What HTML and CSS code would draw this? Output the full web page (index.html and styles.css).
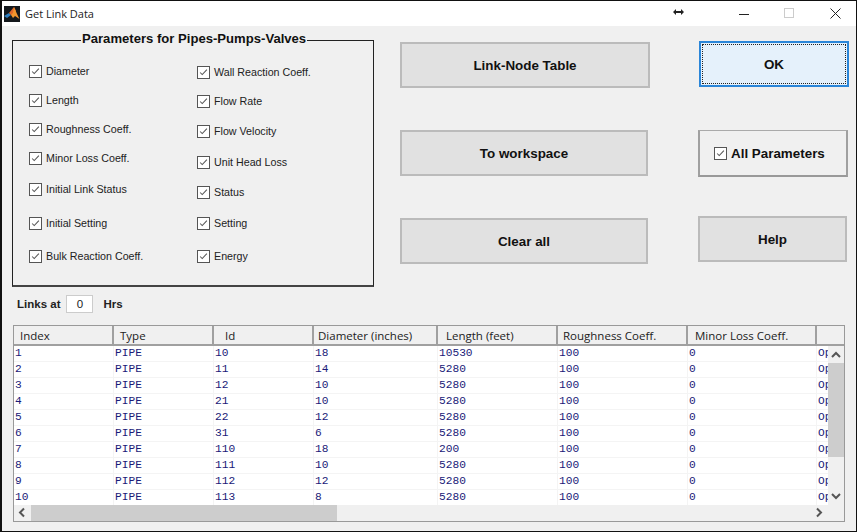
FILE: index.html
```html
<!DOCTYPE html>
<html lang="en">
<head>
  <meta charset="UTF-8" />
  <title>Get Link Data</title>
  <link rel="stylesheet" href="styles.css">
</head>
<body>
  <div class="window">
    <div class="titlebar">
      <svg class="app-icon" width="16" height="16" viewBox="0 0 16 16">
        <rect width="16" height="16" fill="#14181c" />
        <path d="M0 10 L5 7 L7 9 L3 12 Z" fill="#2f7fc0" />
        <path d="M5 7 L10 1 L12 5 L9 9 L7 9 Z" fill="#e2682a" />
        <path d="M10 1 L13 8 L15.5 13 L11 10 L9 12 L7 9 L9 7 Z" fill="#f2952e" />
      </svg>
      <span class="title">Get Link Data</span>
      <svg class="resize-icon" width="12" height="6" viewBox="0 0 12 6">
        <path d="M0 3 L3 0 V2 H8 V0 L11 3 L8 6 V4 H3 V6 Z" fill="#222" />
      </svg>
      <svg class="win-btn min" width="11" height="11" viewBox="0 0 11 11">
        <path d="M0 6.5 H10" stroke="#222" stroke-width="1" />
      </svg>
      <svg class="win-btn max" width="11" height="11" viewBox="0 0 11 11">
        <rect x="0.5" y="0.5" width="9" height="9" fill="none" stroke="#ccc" />
      </svg>
      <svg class="win-btn close" width="11" height="11" viewBox="0 0 11 11">
        <path d="M0.5 0.5 L10.5 10.5 M10.5 0.5 L0.5 10.5" stroke="#222" stroke-width="1" />
      </svg>
    </div>

    <div class="content">
      <div class="top-row">
        <fieldset class="params">
          <legend>Parameters for Pipes-Pumps-Valves</legend>
          <div class="param-col left">
            <label class="check"><input type="checkbox" checked /><span>Diameter</span></label>
            <label class="check"><input type="checkbox" checked /><span>Length</span></label>
            <label class="check"><input type="checkbox" checked /><span>Roughness Coeff.</span></label>
            <label class="check"><input type="checkbox" checked /><span>Minor Loss Coeff.</span></label>
            <label class="check"><input type="checkbox" checked /><span>Initial Link Status</span></label>
            <label class="check"><input type="checkbox" checked /><span>Initial Setting</span></label>
            <label class="check"><input type="checkbox" checked /><span>Bulk Reaction Coeff.</span></label>
          </div>
          <div class="param-col right">
            <label class="check"><input type="checkbox" checked /><span>Wall Reaction Coeff.</span></label>
            <label class="check"><input type="checkbox" checked /><span>Flow Rate</span></label>
            <label class="check"><input type="checkbox" checked /><span>Flow Velocity</span></label>
            <label class="check"><input type="checkbox" checked /><span>Unit Head Loss</span></label>
            <label class="check"><input type="checkbox" checked /><span>Status</span></label>
            <label class="check"><input type="checkbox" checked /><span>Setting</span></label>
            <label class="check"><input type="checkbox" checked /><span>Energy</span></label>
          </div>
        </fieldset>

        <div class="actions middle">
          <button class="btn wide">Link-Node Table</button>
          <button class="btn">To workspace</button>
          <button class="btn">Clear all</button>
        </div>

        <div class="actions side">
          <button class="btn ok"><span class="focus">OK</span></button>
          <label class="all-params"><input type="checkbox" checked /><span>All Parameters</span></label>
          <button class="btn help">Help</button>
        </div>
      </div>

      <div class="links-row">
        <span>Links at</span>
        <span class="hours">0</span>
        <span>Hrs</span>
      </div>

      <div class="grid-box">
        <div class="grid-head">
          <div class="c1">Index</div>
          <div class="c2">Type</div>
          <div class="c3">Id</div>
          <div class="c4">Diameter (inches)</div>
          <div class="c5">Length (feet)</div>
          <div class="c6">Roughness Coeff.</div>
          <div class="c7">Minor Loss Coeff.</div>
          <div class="c8"></div>
        </div>
        <div class="grid-body" id="gridBody"></div>
        <div class="vscroll">
          <svg class="arrow" width="16" height="17" viewBox="0 0 16 17"><path d="M4 11 L8 7 L12 11" fill="none" stroke="#555" stroke-width="2" /></svg>
          <div class="vthumb"></div>
          <div class="track"></div>
          <svg class="arrow" width="16" height="15" viewBox="0 0 16 15"><path d="M4 4 L8 8 L12 4" fill="none" stroke="#555" stroke-width="2" /></svg>
        </div>
        <div class="hscroll">
          <svg class="arrow" width="17" height="15" viewBox="0 0 17 15"><path d="M10 3.5 L6 7.5 L10 11.5" fill="none" stroke="#555" stroke-width="2" /></svg>
          <div class="hthumb"></div>
          <div class="track"></div>
          <svg class="arrow" width="17" height="15" viewBox="0 0 17 15"><path d="M6 3.5 L10 7.5 L6 11.5" fill="none" stroke="#555" stroke-width="2" /></svg>
        </div>
      </div>
    </div>
  </div>

  <script src="app.js"></script>
</body>
</html>
```

FILE: styles.css
```css
* {
  box-sizing: border-box;
}

html, body {
  margin: 0;
  padding: 0;
}

body {
  width: 857px;
  height: 532px;
  overflow: hidden;
  font-family: "Liberation Sans", Arial, sans-serif;
}

.window {
  width: 857px;
  height: 532px;
  display: flex;
  flex-direction: column;
  background: #f0f0f0;
  border: 1px solid #111;
  border-width: 1px 1px 1px 2px;
}

/* title bar */
.titlebar {
  height: 25px;
  flex: none;
  display: flex;
  align-items: center;
  background: #fff;
  padding-left: 2px;
}

.app-icon {
  margin-right: 5px;
}

.title {
  width: 70px;
  margin-top: -1px;
  font-family: "Open Sans", sans-serif;
  font-size: 11px;
  color: #222;
  white-space: nowrap;
}

.resize-icon {
  margin-left: 578px;
  margin-top: -4px;
}

.win-btn.min {
  margin-left: 54px;
}

.win-btn.max {
  margin-left: 34px;
}

.win-btn.close {
  margin-left: 35px;
}

/* top part */
.content {
  flex: 1;
  padding: 0 0 0 10px;
}

.top-row {
  display: flex;
  align-items: flex-start;
  height: 261px;
}

.params {
  width: 362px;
  height: 256px;
  margin: 5px 26px 0 0;
  padding: 0 0 0 16px;
  border: 1px solid #222;
  border-bottom: 2px solid #444;
  display: flex;
}

.params legend {
  margin: 0 0 0 52px;
  padding: 0 1px 4px;
  font-size: 13.1px;
  font-weight: bold;
  line-height: 15px;
  color: #111;
}

.param-col {
  display: grid;
  align-content: start;
}

.param-col.left {
  width: 168px;
  padding-top: 13px;
  grid-template-rows: 29px 29px 29px 31px 34px 33px 33px;
}

.param-col.right {
  padding-top: 14px;
  grid-template-rows: 29px 30px 31px 30px 31px 33px 33px;
}

.check {
  display: flex;
  align-items: center;
  height: 16px;
  font-size: 10.7px;
  color: #222;
}

.check input,
.all-params input {
  appearance: none;
  width: 13px;
  height: 13px;
  margin: 0 4px 0 0;
  flex: none;
  border: 1px solid #555;
  background: #fff url("data:image/svg+xml,%3Csvg xmlns='http://www.w3.org/2000/svg' viewBox='0 0 13 13'%3E%3Cpath d='M2.5 6.5 L5 9 L10.5 3' fill='none' stroke='%23555' stroke-width='1.2'/%3E%3C/svg%3E") center no-repeat;
}

.actions {
  display: grid;
  align-content: start;
}

.middle {
  width: 298px;
  padding-top: 16px;
  grid-template-rows: 88px 88px 46px;
}

.side {
  padding-top: 15px;
  grid-template-rows: 89px 86px 46px;
}

.btn {
  width: 248px;
  height: 46px;
  border: 2px solid #bbb;
  background: #e1e1e1;
  font-family: inherit;
  font-size: 13.4px;
  font-weight: bold;
  color: #111;
  padding: 0;
}

.btn.wide {
  width: 250px;
}

.btn.ok {
  width: 150px;
  margin-left: 1px;
  border-color: #2b86d8;
  background: #e5f1fb;
  padding: 1px;
}

.focus {
  display: flex;
  align-items: center;
  justify-content: center;
  height: 100%;
  border: 1px dotted #222;
}

.btn.help {
  width: 149px;
}

.all-params {
  width: 150px;
  height: 47px;
  display: flex;
  align-items: center;
  padding: 1px 0 0 14px;
  border-top: 1px solid #aaa;
  border-right: 2px solid #a0a0a0;
  border-bottom: 2px solid #999;
  border-left: 2px solid #a0a0a0;
  font-size: 13.4px;
  font-weight: bold;
  color: #111;
}

/* links at */
.links-row {
  height: 38px;
  display: flex;
  align-items: center;
  padding: 0 0 4px 5px;
  font-size: 11.5px;
  font-weight: bold;
  color: #222;
}

.hours {
  width: 27px;
  height: 18px;
  margin: 0 10px 0 6px;
  background: #fff;
  border: 1px solid #ccc;
  text-align: center;
  font-weight: normal;
  line-height: 16px;
}

/* table */
.grid-box {
  width: 832px;
  height: 197px;
  margin-left: 1px;
  border: 1px solid #999;
  display: grid;
  grid-template-columns: 814px 16px;
  grid-template-rows: 20px 159px 16px;
  background: #f0f0f0;
}

.grid-head {
  grid-column: 1 / 3;
  display: flex;
  border-bottom: 2px solid #a0a0a0;
  font-family: "Open Sans", sans-serif;
  font-size: 11.5px;
  color: #222;
  line-height: 16px;
}

.grid-head div {
  padding: 2px 0 0 6px;
  border-right: 2px solid #a0a0a0;
}

.grid-head .c3 { padding-left: 11px; }
.grid-head .c4 { padding-left: 4px; }
.grid-head .c5 { padding-left: 8px; }
.grid-head .c6 { padding-left: 5px; }
.grid-head .c7 { padding-left: 7px; }

.c1, .c2, .c3 { width: 100px; flex: none; }
.c4 { width: 124px; flex: none; }
.c5 { width: 120px; flex: none; }
.c6 { width: 130px; flex: none; }
.c7 { width: 129px; flex: none; }
.grid-head .c8 { flex: 1; border-right: 0; }

.grid-body {
  overflow: hidden;
  background: #fff;
}

.grid-row {
  display: flex;
  height: 16px;
  border-bottom: 1px solid #f4f4f4;
  font-family: "Liberation Mono", monospace;
  font-size: 11.2px;
  line-height: 14px;
  color: #1a1a78;
}

.grid-row div {
  padding-left: 1px;
  border-right: 1px solid #f4f4f4;
  overflow: hidden;
  white-space: nowrap;
}

.grid-row .c8 {
  width: 12px;
  flex: none;
  border-right: 0;
}

/* scrollbars */
.vscroll {
  display: flex;
  flex-direction: column;
}

.vthumb {
  height: 94px;
  background: #cdcdcd;
}

.hscroll {
  display: flex;
}

.hthumb {
  width: 306px;
  background: #cdcdcd;
}

.track {
  flex: 1;
}

.arrow {
  flex: none;
  display: block;
}
```

FILE: app.js
```js
const rows = [
  [1, 10, 18, 10530], [2, 11, 14, 5280], [3, 12, 10, 5280], [4, 21, 10, 5280], [5, 22, 12, 5280],
  [6, 31, 6, 5280], [7, 110, 18, 200], [8, 111, 10, 5280], [9, 112, 12, 5280], [10, 113, 8, 5280]
];

const gridBody = document.getElementById("gridBody");

rows.forEach((r) => {
  const row = document.createElement("div");
  row.className = "grid-row";
  const cells = [r[0], "PIPE", r[1], r[2], r[3], 100, 0, "Open"];
  cells.forEach((value, i) => {
    const cell = document.createElement("div");
    cell.className = "c" + (i + 1);
    cell.textContent = value;
    row.appendChild(cell);
  });
  gridBody.appendChild(row);
});
```
